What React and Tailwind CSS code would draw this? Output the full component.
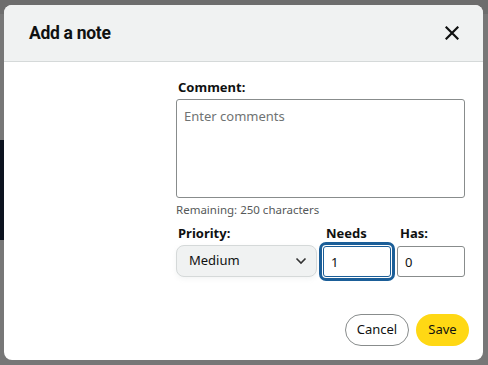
import { useState } from 'react'

export default function App() {
  const [comment, setComment] = useState('')
  const [needs, setNeeds] = useState('1')
  const [has, setHas] = useState('0')

  return (
    <div className="relative w-[488px] h-[365px] overflow-hidden bg-[#777777]" style={{ fontFamily: '"Noto Sans", Arial, sans-serif' }}>
      {/* dimmed page behind the modal */}
      <div className="absolute left-0 top-[140px] w-[6px] h-[100px] bg-[#0d1320]" />
      <div className="absolute left-0 top-0 w-full h-[14px] bg-[#6d6d6d]" />

      {/* Modal */}
      <div className="absolute left-[4px] top-[5px] w-[479px] h-[355px] bg-white rounded-lg overflow-hidden flex flex-col">
        {/* Header */}
        <div className="h-[57px] shrink-0 bg-[#f0f2f2] border-b border-[#d5d9d9] flex items-center justify-between pl-[25px] pr-[19px]">
          <h2 className="text-[17.5px] font-bold text-[#0f1111] tracking-[-0.3px] pt-[1px]" style={{ fontFamily: 'Roboto, Arial, sans-serif' }}>Add a note</h2>
          <button className="w-6 h-6 flex items-center justify-center text-[#0f1111]">
            <svg width="14" height="14" viewBox="0 0 14 14" fill="none" stroke="currentColor" strokeWidth="2.2" strokeLinecap="square">
              <path d="M1.5 1.5 L12.5 12.5 M12.5 1.5 L1.5 12.5" />
            </svg>
          </button>
        </div>

        {/* Body */}
        <div className="flex-1 flex flex-col pl-[172px] pr-[18px] pt-[16px] pb-[14px]">
          <label className="text-[13px] font-bold text-[#0f1111] leading-[18px] pl-[2px]">Comment:</label>
          <textarea
            value={comment}
            onChange={(e) => setComment(e.target.value)}
            placeholder="Enter comments"
            className="mt-[3px] h-[99px] w-[289px] resize-none rounded-[3px] border border-[#888c8c] px-[7px] pt-[7px] pb-[5px] text-[13px] text-[#0f1111] placeholder:text-[#6f7373] outline-none"
          />
          <p className="mt-[4px] text-[11.5px] text-[#565959] leading-[15px]">Remaining: {250 - comment.length} characters</p>

          <div className="mt-[8px] flex gap-[6px]">
            <div className="flex flex-col w-[141px]">
              <span className="text-[13px] font-bold text-[#0f1111] leading-[16px] pl-[2px]">Priority:</span>
              <div className="mt-[4px] h-[32px] rounded-lg bg-[#f0f2f2] border border-[#d5d9d9] flex items-center justify-between pl-[12px] pr-[9px] shadow-[0_2px_5px_rgba(213,217,217,0.3)]">
                <span className="text-[13px] text-[#0f1111]">Medium</span>
                <svg width="12" height="8" viewBox="0 0 12 8" fill="none" stroke="#333" strokeWidth="1.6">
                  <path d="M1.5 1.5 L6 6 L10.5 1.5" />
                </svg>
              </div>
            </div>
            <div className="flex flex-col w-[68px]">
              <span className="text-[13px] font-bold text-[#0f1111] leading-[16px] pl-[3px]">Needs</span>
              <input
                value={needs}
                onChange={(e) => setNeeds(e.target.value)}
                className="mt-[5px] h-[31px] w-full rounded-[3px] border border-[#1b5e98] px-[7px] text-[13px] text-[#0f1111] outline-[3px] outline-solid outline-[#1b5e98] outline-offset-[1px]"
              />
            </div>
            <div className="flex flex-col w-[68px]">
              <span className="text-[13px] font-bold text-[#0f1111] leading-[16px] pl-[3px]">Has:</span>
              <input
                value={has}
                onChange={(e) => setHas(e.target.value)}
                className="mt-[5px] h-[31px] w-full rounded-[3px] border border-[#888c8c] px-[7px] text-[13px] text-[#0f1111] outline-none"
              />
            </div>
          </div>

          <div className="mt-auto flex justify-end gap-[7px]">
            <button className="h-[32px] w-[64px] rounded-full border border-[#888c8c] bg-white text-[13px] text-[#0f1111]">Cancel</button>
            <button className="h-[32px] w-[53px] rounded-full bg-[#ffd814] text-[13px] text-[#0f1111] -mr-[4px]">Save</button>
          </div>
        </div>
      </div>
    </div>
  )
}
